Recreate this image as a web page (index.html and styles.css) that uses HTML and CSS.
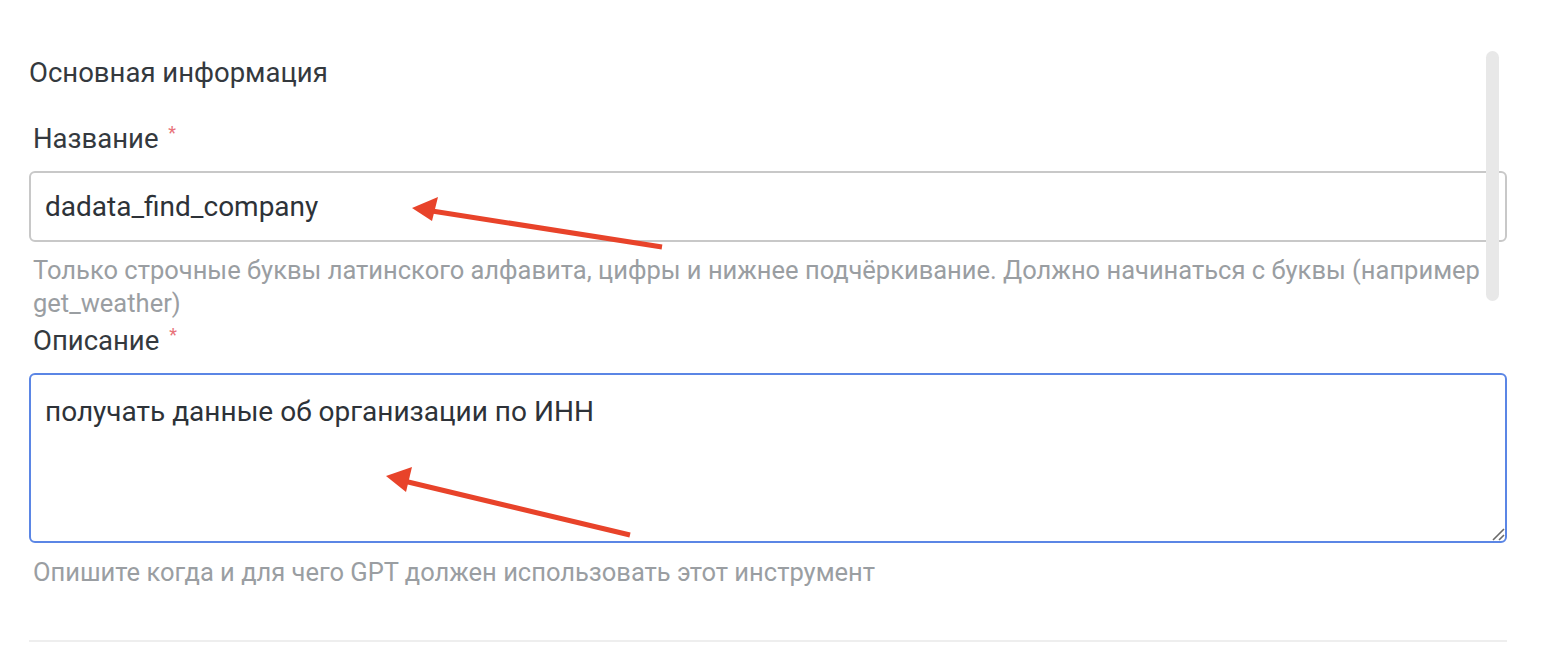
FILE: index.html
```html
<!DOCTYPE html>
<html lang="ru">
<head>
<meta charset="utf-8">
<title>Основная информация</title>
<link rel="stylesheet" href="styles.css">
</head>
<body>
<div class="page">
  <div class="form">
    <h2 class="section-title">Основная информация</h2>
    <div class="field">
      <label class="label">Название <span class="req">*</span></label>
      <div class="control input">dadata_find_company</div>
      <p class="hint">Только строчные буквы латинского алфавита, цифры и нижнее подчёркивание. Должно начинаться с буквы (например get_weather)</p>
    </div>
    <div class="field">
      <label class="label">Описание <span class="req">*</span></label>
      <div class="control textarea focused">получать данные об организации по ИНН
        <svg class="resize" width="16" height="16" viewBox="0 0 16 16"><path d="M15 4 L4 15 M15 10 L10 15" stroke="#6a6a6a" stroke-width="1.6" fill="none"/></svg>
      </div>
      <p class="hint hint-short">Опишите когда и для чего GPT должен использовать этот инструмент</p>
    </div>
    <div class="divider"></div>
  </div>
  <div class="scrollbar"></div>
  <svg class="arrows" width="1554" height="650" viewBox="0 0 1554 650">
    <line x1="662" y1="247" x2="432" y2="211" stroke="#e8432a" stroke-width="5"/>
    <polygon points="412,208 438,197 432,221" fill="#e8432a"/>
    <line x1="630" y1="535" x2="404" y2="481" stroke="#e8432a" stroke-width="5"/>
    <polygon points="386,476 412,467 406,492" fill="#e8432a"/>
  </svg>
</div>
</body>
</html>
```

FILE: styles.css
```css
html, body {
  margin: 0;
  padding: 0;
  background: #ffffff;
}
.page {
  position: relative;
  width: 1554px;
  height: 650px;
  overflow: hidden;
  font-family: "Roboto", "Liberation Sans", sans-serif;
  color: #34393e;
}
.form {
  padding: 56px 47px 0 29px;
  display: flex;
  flex-direction: column;
}
.section-title {
  margin: 0 0 26px 0;
  font-size: 27.5px;
  font-weight: 400;
  line-height: 34px;
}
.field {
  display: flex;
  flex-direction: column;
}
.field + .field {
  margin-top: -2px;
}
.label {
  padding-left: 4px;
  font-size: 27.5px;
  line-height: 34px;
  margin-bottom: 15px;
}
.req {
  color: #e8737a;
  font-size: 18px;
  vertical-align: 9px;
  margin-left: 3px;
}
.control {
  border: 2px solid #c8c8c8;
  border-radius: 6px;
  padding: 0 14px;
  font-size: 28px;
  color: #2d3238;
  box-sizing: border-box;
}
.input {
  height: 71px;
  line-height: 67px;
}
.textarea {
  position: relative;
  height: 170px;
  padding-top: 17px;
  line-height: 40px;
  border-color: #5b86e5;
}
.resize {
  position: absolute;
  right: 0;
  bottom: 0;
}
.hint {
  margin: 0;
  padding-left: 4px;
  padding-top: 12px;
  font-size: 25.5px;
  line-height: 33px;
  color: #9a9ea2;
}
.hint-short {
  padding-top: 13px;
}
.divider {
  margin-top: 51px;
  height: 2px;
  background: #eeeeee;
}
.scrollbar {
  position: absolute;
  left: 1486px;
  top: 51px;
  width: 13px;
  height: 250px;
  border-radius: 7px;
  background: #e8e8e8;
}
.arrows {
  position: absolute;
  left: 0;
  top: 0;
  pointer-events: none;
}
```
